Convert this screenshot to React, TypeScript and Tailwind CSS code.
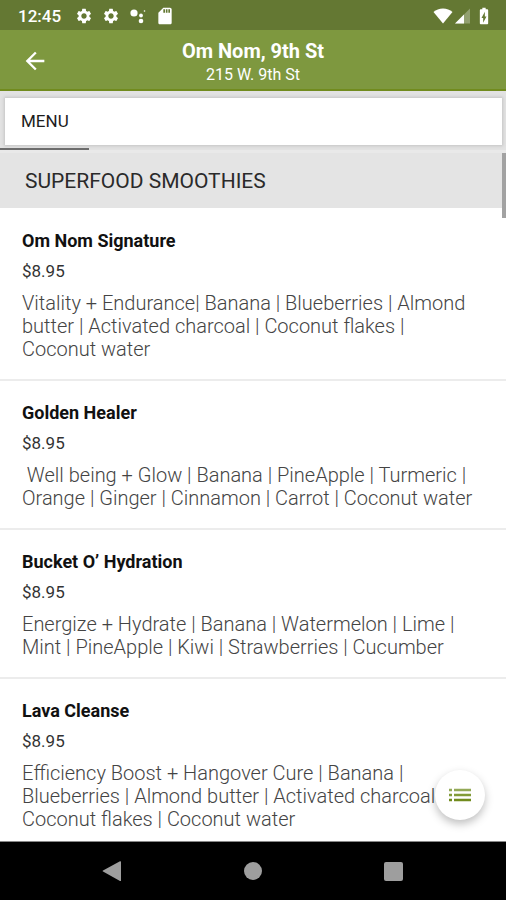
import { MdArrowBack, MdBatteryChargingFull, MdSdCard, MdSettings } from 'react-icons/md';

const items = [
  {
    name: 'Om Nom Signature',
    price: '$8.95',
    description:
      'Vitality + Endurance| Banana | Blueberries | Almond\nbutter | Activated charcoal | Coconut flakes |\nCoconut water',
  },
  {
    name: 'Golden Healer',
    price: '$8.95',
    description:
      ' Well being + Glow | Banana | PineApple | Turmeric |\nOrange | Ginger | Cinnamon | Carrot | Coconut water',
  },
  {
    name: 'Bucket O’ Hydration',
    price: '$8.95',
    description:
      'Energize + Hydrate | Banana | Watermelon | Lime |\nMint | PineApple | Kiwi | Strawberries | Cucumber',
  },
  {
    name: 'Lava Cleanse',
    price: '$8.95',
    description:
      'Efficiency Boost + Hangover Cure | Banana |\nBlueberries | Almond butter | Activated charcoal\nCoconut flakes | Coconut water',
  },
];

function StatusBar() {
  return (
    <div className="h-[30px] shrink-0 bg-[#647833] pl-[18px] pr-3 pt-px flex items-center justify-between text-white">
      <div className="flex items-center">
        <span className="w-[57px] text-[17px] leading-6 font-medium">12:45</span>
        <MdSettings size={18} className="mr-[9px]" />
        <MdSettings size={18} className="mr-[9px]" />
        <svg width="18" height="18" viewBox="0 0 18 18" fill="currentColor" className="mr-2">
          <circle cx="5" cy="6" r="3.6" />
          <circle cx="12" cy="8.5" r="1.9" />
          <circle cx="12" cy="14" r="2.3" />
          <circle cx="15.5" cy="4" r="0.8" />
        </svg>
        <MdSdCard size={20} />
      </div>
      <div className="flex items-center">
        <svg width="20" height="16" viewBox="0 0 20 16" fill="currentColor" className="mr-0.5">
          <path d="M10 15.5 0.5 4C3 1.8 6.300 .5 10 .5s7 1.300 9.500 3.500z" />
        </svg>
        <svg width="15" height="16" viewBox="0 0 15 16" fill="currentColor" className="mr-1">
          <path d="M0 15.500 15 .5v15z" fillOpacity="0.3" />
          <path d="M0 15.500 9 6.500v9z" />
        </svg>
        <MdBatteryChargingFull size={20} />
      </div>
    </div>
  );
}

function Header() {
  return (
    <header className="h-[61px] shrink-0 bg-[#7e983f] border-b-2 border-[#718b1d] px-[21px] grid grid-cols-[28px_1fr_28px] items-center text-white">
      <button type="button" aria-label="Back" className="pt-0.5">
        <MdArrowBack size={28} />
      </button>
      <div className="text-center pt-1.5">
        <h1 className="text-xl leading-6 font-bold">Om Nom, 9th St</h1>
        <p className="text-base leading-6">215 W. 9th St</p>
      </div>
    </header>
  );
}

function Tabs() {
  return (
    <nav className="shrink-0 bg-[#e2e2e2] pt-[7px]">
      <div className="ml-[5px] mr-1 bg-white shadow-[0_0_3px_1px_#c4c4c4]">
        <button type="button" className="h-[47px] px-4 text-[17px] text-[#1c1c1c]">
          MENU
        </button>
      </div>
      <div className="mt-[3px] h-[2px] w-[89px] bg-[#6c6c6c]" />
      <div className="h-[3px] bg-[#e9e9e9]" />
    </nav>
  );
}

export default function App() {
  return (
    <div className="h-screen flex flex-col overflow-hidden bg-white font-['Roboto',sans-serif]">
      <StatusBar />
      <Header />
      <Tabs />

      <main className="relative flex-1 min-h-0 overflow-hidden">
        <h2 className="h-[55px] bg-[#e4e4e4] px-[25px] pt-0.5 flex items-center text-[21px] text-[#2a2a2a]">
          SUPERFOOD SMOOTHIES
        </h2>
        <ul className="pt-px">
          {items.map((item) => (
            <li key={item.name} className="px-[22px] pt-[19px] pb-[18px] border-b-2 border-[#ececec]">
              <h3 className="text-lg leading-[26px] font-bold text-[#111]">{item.name}</h3>
              <p className="text-[17px] leading-[34px] text-[#333]">{item.price}</p>
              <p className="pt-1 text-xl leading-[23px] font-light whitespace-pre text-[#444]">
                {item.description}
              </p>
            </li>
          ))}
        </ul>

        <div className="absolute top-0 right-0 h-[65px] w-1 bg-[#a2a2a2]" />
        <button
          type="button"
          aria-label="Menu sections"
          className="absolute right-[21px] bottom-[21px] size-[50px] rounded-full bg-white shadow-[0_4px_8px_rgba(0,0,0,0.25)] flex items-center justify-center"
        >
          <svg width="24" height="14" viewBox="0 0 24 14" fill="none" strokeWidth="2.500">
            <path stroke="#93a957" d="M1 2h3M6 2h17" />
            <path stroke="#829b38" d="M1 7h3M6 7h17" />
            <path stroke="#718b1d" d="M1 12h3M6 12h17" />
          </svg>
        </button>
      </main>

      <footer className="h-[59px] shrink-0 bg-black border-t border-[#888] grid grid-cols-[1fr_58px_1fr] items-center text-[#9e9e9e]">
        <button type="button" aria-label="System back" className="justify-self-end mr-[102px]">
          <svg width="20" height="20" viewBox="0 0 20 20" fill="currentColor">
            <path d="M19 .5v19.500a1 1 0 0 1-1 0L1 10.500q-.8-.5 0-1L18 .3z" />
          </svg>
        </button>
        <button type="button" aria-label="Home" className="justify-self-center size-[18px] rounded-full bg-[#9e9e9e]" />
        <button type="button" aria-label="Recent apps" className="ml-[102px] size-[19px] rounded-xs bg-[#9e9e9e]" />
      </footer>
    </div>
  );
}
